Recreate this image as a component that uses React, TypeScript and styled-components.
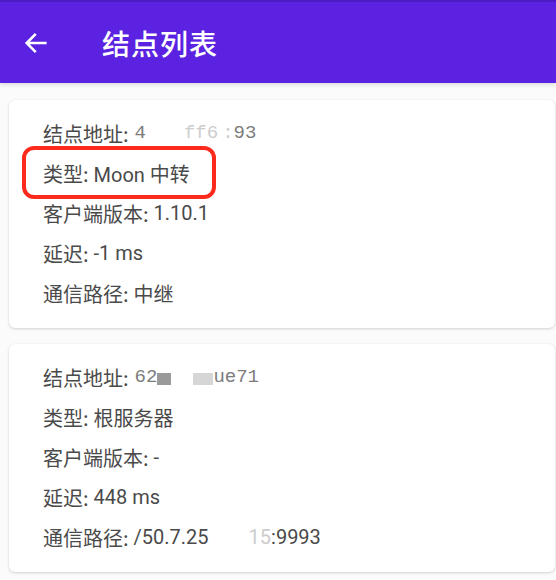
import React from 'react';
import styled, { createGlobalStyle } from 'styled-components';

const GlobalStyle = createGlobalStyle`
  body {
    margin: 0;
    background: #fbfbfb;
    font-family: Roboto, "Noto Sans CJK SC", sans-serif;
  }
`;

const Page = styled.div`
  width: 556px;
  height: 580px;
  overflow: hidden;
`;

const TopBar = styled.header`
  height: 81px;
  border-top: 2px solid #4d1bc4;
  background: #5b22e1;
  display: flex;
  align-items: center;
  padding-left: 22px;
  gap: 52px;
  box-shadow: 0 2px 4px rgba(0, 0, 0, 0.12);
`;

const Title = styled.h1`
  margin: 0;
  color: #fff;
  font-family: "Noto Sans CJK SC", sans-serif;
  font-size: 28px;
  font-weight: 500;
  letter-spacing: 1px;
`;

const List = styled.main`
  display: flex;
  flex-direction: column;
  gap: 16px;
  padding: 17px 1px 0 9px;
`;

const Card = styled.section`
  background: #fff;
  border-radius: 6px;
  box-shadow: 0 1px 3px rgba(0, 0, 0, 0.16), 0 0 1px rgba(0, 0, 0, 0.08);
  padding: 13px 0 15px 34px;
`;

const Row = styled.div<{ $marked?: boolean }>`
  position: relative;
  height: 40px;
  display: flex;
  align-items: center;
  font-size: 20px;
  color: #4a4a4a;
  white-space: pre;

  ${(p) =>
    p.$marked &&
    `
    &::before {
      content: '';
      position: absolute;
      left: -21px;
      top: -7px;
      width: 194px;
      height: 53px;
      box-sizing: border-box;
      border: 4px solid #fb2a1c;
      border-radius: 12px;
    }
  `}
`;

const Label = styled.span`
  font-family: "Noto Sans CJK SC", sans-serif;
`;

const Value = styled.span`
  font-family: Roboto, "Noto Sans CJK SC", sans-serif;
  margin-left: 5px;
`;

const Mono = styled.span`
  font-family: "Liberation Mono", "DejaVu Sans Mono", monospace;
  font-size: 19px;
  color: #7c7c7c;
  margin-left: 6px;
  display: inline-flex;
  align-items: center;
`;

const Faded = styled.span`
  color: #cdcdcd;
`;

const Blot = styled.span<{ $tone: string; $w: number }>`
  display: inline-block;
  width: ${(p) => p.$w}px;
  height: 12px;
  background: ${(p) => p.$tone};
  margin-top: 4px;
`;

const Gap = styled.span<{ $w: number }>`
  display: inline-block;
  width: ${(p) => p.$w}px;
`;

const BackArrow = () => (
  <svg width="28" height="28" viewBox="0 0 24 24" fill="none">
    <path d="M20 12H4.5M11 5l-7 7 7 7" stroke="#fff" strokeWidth="2.2" strokeLinecap="square" />
  </svg>
);

export default function App() {
  return (
    <Page>
      <GlobalStyle />
      <TopBar>
        <BackArrow />
        <Title>结点列表</Title>
      </TopBar>
      <List>
        <Card>
          <Row>
            <Label>结点地址:</Label>
            <Mono>
              4<Gap $w={38} />
              <Faded>ff6</Faded>
              <Gap $w={4} />
              <Faded>:</Faded>93
            </Mono>
          </Row>
          <Row $marked>
            <Label>类型:</Label>
            <Value>Moon 中转</Value>
          </Row>
          <Row>
            <Label>客户端版本:</Label>
            <Value>1.10.1</Value>
          </Row>
          <Row>
            <Label>延迟:</Label>
            <Value>-1 ms</Value>
          </Row>
          <Row>
            <Label>通信路径:</Label>
            <Value>中继</Value>
          </Row>
        </Card>
        <Card>
          <Row>
            <Label>结点地址:</Label>
            <Mono>
              62<Blot $tone="#9a9a9a" $w={14} />
              <Gap $w={22} />
              <Blot $tone="#d6d6d6" $w={20} />
              ue71
            </Mono>
          </Row>
          <Row>
            <Label>类型:</Label>
            <Value>根服务器</Value>
          </Row>
          <Row>
            <Label>客户端版本:</Label>
            <Value>-</Value>
          </Row>
          <Row>
            <Label>延迟:</Label>
            <Value>448 ms</Value>
          </Row>
          <Row>
            <Label>通信路径:</Label>
            <Value>
              /50.7.25<Gap $w={40} />
              <Faded>15</Faded>
              :9993
            </Value>
          </Row>
        </Card>
      </List>
    </Page>
  );
}
